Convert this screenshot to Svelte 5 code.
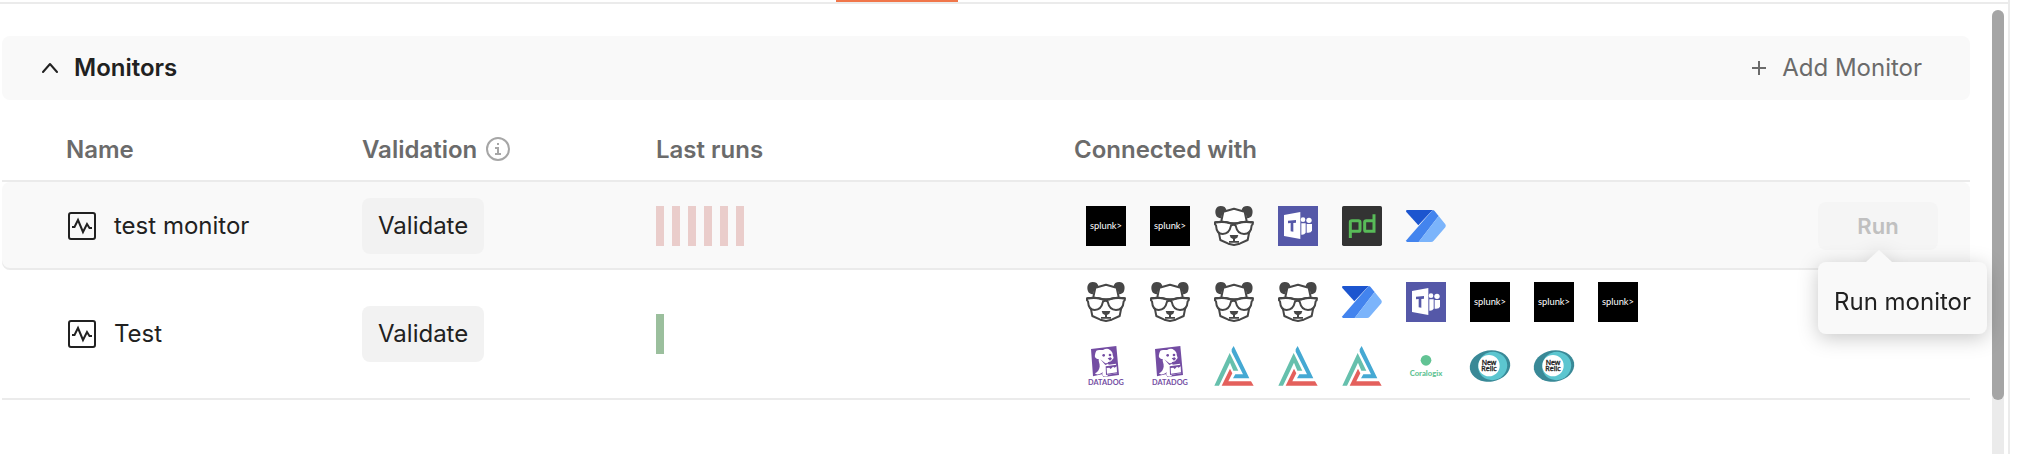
<script>
  const monitors = [
    {
      name: 'test monitor',
      status: 'failed',
      runs: 6,
      hovered: true,
      integrations: ['splunk', 'splunk', 'panda', 'teams', 'pagerduty', 'automate']
    },
    {
      name: 'Test',
      status: 'passed',
      runs: 1,
      hovered: false,
      integrations: [
        'panda', 'panda', 'panda', 'panda', 'automate', 'teams', 'splunk', 'splunk', 'splunk',
        'datadog', 'datadog', 'triangle', 'triangle', 'triangle', 'coralogix', 'newrelic', 'newrelic'
      ]
    }
  ];
  let open = $state(true);
</script>

{#snippet logo(kind)}
  <svg class="logo" viewBox="0 0 120 120" aria-hidden="true">
    {#if kind === 'splunk'}
      <rect width="120" height="120" fill="#000" />
      <text x="60" y="68" text-anchor="middle" font-size="28" fill="#fff" class="lato">splunk&gt;</text>
    {:else if kind === 'panda'}
      <g fill="#464646">
        <path d="M6 28C1 14 6 0 20 0c10 0 16 5 17 12L26 20l-5 17C13 36 8 33 6 28z" />
        <path d="M114 28c5-14 0-28-14-28-10 0-16 5-17 12l11 8 5 17c8-1 13-4 15-9z" />
      </g>
      <g fill="none" stroke="#464646" stroke-width="6" stroke-linejoin="round">
        <path fill="#fff" d="M22 45l6-28L60 8l32 9 6 28 8 32-5 25-24 11-17 4-17-4-24-11-5-25z" />
        <path fill="#fff" d="M3 49q29-5 48 3l9 1 9-1q19-8 48-3l-1 6-3 3c-1 17-7 26-23 26-15 0-22-10-25-25q-7-5-14 0c-3 15-10 25-25 25C13 84 7 75 6 58l-3-3z" />
      </g>
      <path fill="none" stroke="#464646" stroke-width="7" d="M4 49q28-4 47 3h18q19-7 47-3" />
      <path fill="#464646" d="M47 87h26l-3 8-7 4v6h12v5H45v-5h12v-6l-7-4z" />
    {:else if kind === 'teams'}
      <rect width="120" height="120" fill="#5558a8" />
      <g fill="#fff">
        <path d="M18 27l49-9v81l-49-9z" />
        <circle cx="75" cy="41" r="7" />
        <circle cx="93" cy="43" r="8" />
        <path d="M70 52h13v28q-4 7-13 6zM86 54h16v20q-3 8-16 6z" />
      </g>
      <path fill="#5558a8" d="M30 44l24-2v8l-8 1v26l-8-1V51l-8 1z" />
    {:else if kind === 'pagerduty'}
      <rect width="120" height="120" rx="5" fill="#333" />
      <g fill="none" stroke="#58bb58" stroke-width="9">
        <path d="M25 96V48q0-4 5-4h19q5 0 5 5v22q0 5-5 5H29" />
        <path d="M96 25v51H73q-5 0-5-5V49q0-5 5-5h22" />
      </g>
    {:else if kind === 'automate'}
      <path fill="#1c55cf" d="M0 15q0-3 4-3h76L37 58 1 18z" />
      <path fill="#4384ee" d="M80 12q3 0 5 2l13 16-60 78H4q-5 0-3-5z" />
      <path fill="#7bb4fb" d="M98 30l20 25q3 5 0 9l-35 40q-3 4-8 4H38z" />
    {:else if kind === 'datadog'}
      <path fill="#744da3" d="M15 9L91 0l8 87-46 6-6-8-26 6z" />
      <path fill="#fff" d="M31 14c6-4 14-1 20-2 7-3 14-6 21 0 5 4 9 9 8 14l3 10-8 10-10 3 3 7 22-3 4 29-28 4c0 4-7 8-14 4-4-3-4-8-1-12-8 6-19 11-24 4 8-4 13-11 14-20 1-9-4-15-3-23-8 0-13-5-11-12 1-7 3-11 4-13z" />
      <g fill="#744da3">
        <circle cx="53" cy="28" r="4" />
        <circle cx="72" cy="27" r="4" />
        <path d="M65 37l9-3 4 4-6 6zM59 61l33-5 4 25-36 6zM43 40l15 12 14-1-14 6z" />
      </g>
      <path fill="#fff" d="M62 66l8-1 4 4 7-7 5 3 6-4 1 18-30 4z" />
      <text x="60" y="118" text-anchor="middle" font-size="22" font-weight="700" fill="#744da3" class="lato">DATADOG</text>
    {:else if kind === 'triangle'}
      <path fill="#66c0ad" d="M1 119l46-98 26 53H58L48 50 15 119z" />
      <path fill="#45a9d3" d="M53 10L59 0l47 97H57l7-12h23L53 17z" />
      <path fill="#e4605c" d="M23 119l25-51 7 14-12 24h68l8 13z" />
    {:else if kind === 'coralogix'}
      <circle cx="60" cy="43" r="16" fill="#62c394" />
      <text x="60" y="91" text-anchor="middle" font-size="23" font-weight="900" fill="#62c394" class="lato">Coralogix</text>
    {:else}
      <ellipse cx="60" cy="60" rx="61" ry="47" fill="#398997" transform="rotate(-9 60 60)" />
      <ellipse cx="68" cy="60" rx="44" ry="42" fill="#5cc6d0" transform="rotate(-25 68 60)" />
      <circle cx="57" cy="59" r="32" fill="#fff" />
      <text x="57" y="56" text-anchor="middle" font-size="21" fill="#222" stroke="#222" class="noto">New</text>
      <text x="57" y="76" text-anchor="middle" font-size="21" fill="#222" stroke="#222" class="noto">Relic</text>
    {/if}
  </svg>
{/snippet}

<main class="page">
  <div class="tabs"><span class="active-tab"></span></div>
  <div class="body">
    <section class="content">
      <header class="section-head">
        <button class="toggle" aria-expanded={open} onclick={() => (open = !open)}>
          <svg width="16" height="12" viewBox="0 0 16 12" aria-hidden="true">
            <path d="M1 10l7-8 7 8" fill="none" stroke="#212121" stroke-width="2" stroke-linecap="round" stroke-linejoin="round" />
          </svg>
          <span>Monitors</span>
        </button>
        <button class="add">
          <svg width="14" height="14" viewBox="0 0 14 14" aria-hidden="true">
            <path d="M7 0v14M0 7h14" stroke="#6b6b6b" stroke-width="2" />
          </svg>
          <span>Add Monitor</span>
        </button>
      </header>

      {#if open}
        <table>
          <colgroup>
            <col class="col-name" /><col class="col-validation" /><col class="col-runs" /><col /><col class="col-action" />
          </colgroup>
          <thead>
            <tr>
              <th class="first">Name</th>
              <th>
                <div class="with-info">
                  Validation
                  <svg width="24" height="24" viewBox="0 0 24 24" aria-hidden="true">
                    <circle cx="12" cy="12" r="11" fill="none" stroke="#a6a6a6" stroke-width="2" />
                    <path d="M9 11h3v6M9 17h6M11 7h2" fill="none" stroke="#a6a6a6" stroke-width="2" />
                  </svg>
                </div>
              </th>
              <th>Last runs</th>
              <th>Connected with</th>
              <td></td>
            </tr>
          </thead>
          <tbody>
            {#each monitors as monitor}
              <tr class:hovered={monitor.hovered}>
                <td class="first">
                  <div class="name">
                    <svg width="28" height="28" viewBox="0 0 28 28" aria-hidden="true">
                      <rect x="1" y="1" width="26" height="26" rx="2" fill="none" stroke="#212121" stroke-width="2" />
                      <path d="M4 15h2.500l3.500-7 5 12 4-8 2.500 4H24" fill="none" stroke="#212121" stroke-width="2" />
                    </svg>
                    <span>{monitor.name}</span>
                  </div>
                </td>
                <td><button class="validate">Validate</button></td>
                <td>
                  <div class="runs">
                    {#each Array(monitor.runs) as _}<span class="run {monitor.status}"></span>{/each}
                  </div>
                </td>
                <td>
                  <div class="logos">
                    {#each monitor.integrations as kind}{@render logo(kind)}{/each}
                  </div>
                </td>
                <td>
                  {#if monitor.hovered}
                    <div class="action">
                      <button class="run-button" disabled>Run</button>
                      <div class="tooltip" role="tooltip">Run monitor</div>
                    </div>
                  {/if}
                </td>
              </tr>
            {/each}
          </tbody>
        </table>
      {/if}
    </section>
    <div class="scrollbar"><div class="thumb"></div></div>
  </div>
</main>

<style>
  :global(body) {
    background: #fff;
  }
  .page {
    box-sizing: border-box;
    display: flex;
    flex-direction: column;
    min-height: 100vh;
    margin-right: 32px;
    border-right: 2px solid #ebebeb;
    color: #212121;
    font-family: Inter, sans-serif;
    font-size: 24px;
    line-height: 32px;
  }
  .tabs {
    display: flex;
    height: 2px;
    padding-left: 836px;
    border-bottom: 2px solid #ebebeb;
  }
  .active-tab {
    width: 122px;
    background: #f0764a;
  }
  .body {
    flex: 1;
    display: flex;
    padding: 0 4px 0 2px;
  }
  .content {
    flex: 1;
    min-width: 0;
    padding-top: 32px;
  }
  button {
    border: 0;
    font: inherit;
    color: inherit;
    background: none;
  }
  .section-head {
    display: flex;
    align-items: center;
    justify-content: space-between;
    padding: 16px 48px 16px 40px;
    border-radius: 8px;
    background: #f9f9f9;
  }
  .toggle,
  .add {
    display: flex;
    align-items: center;
    gap: 16px;
    padding: 0;
  }
  .toggle {
    font-weight: 600;
  }
  .add {
    color: #6b6b6b;
  }
  table {
    width: 100%;
    table-layout: fixed;
    border-collapse: separate;
    border-spacing: 0;
  }
  .col-name {
    width: 360px;
  }
  .col-validation {
    width: 294px;
  }
  .col-runs {
    width: 418px;
  }
  .col-action {
    width: 152px;
  }
  th,
  td {
    padding: 0;
    text-align: left;
    vertical-align: middle;
    box-shadow: inset 0 -2px #ebebeb;
  }
  th {
    height: 82px;
    padding-top: 18px;
    box-sizing: border-box;
    color: #6b6b6b;
    font-weight: 600;
  }
  .first {
    padding-left: 64px;
  }
  .with-info {
    display: flex;
    align-items: center;
    gap: 9px;
  }
  .with-info svg {
    margin-bottom: 2px;
  }
  tbody tr {
    height: 88px;
  }
  tbody tr:last-child td {
    padding-bottom: 2px;
  }
  .hovered td {
    background: #f9f9f9;
  }
  .hovered td:first-child {
    border-radius: 8px 0 0 8px;
  }
  .hovered td:last-child {
    border-radius: 0 8px 8px 0;
  }
  .name {
    display: flex;
    align-items: center;
    gap: 18px;
    padding-left: 2px;
  }
  .validate {
    display: block;
    padding: 12px 16px;
    border-radius: 8px;
    background: #f2f2f2;
  }
  .runs {
    display: flex;
    gap: 8px;
  }
  .run {
    width: 8px;
    height: 40px;
  }
  .failed {
    background: #eacdcb;
  }
  .passed {
    background: #9bbf9d;
  }
  .logos {
    display: flex;
    flex-wrap: wrap;
    gap: 24px;
    max-width: 552px;
    padding: 12px;
  }
  .logo {
    width: 40px;
    height: 40px;
    overflow: visible;
  }
  .lato {
    font-family: Lato, sans-serif;
  }
  .noto {
    font-family: 'Noto Sans', sans-serif;
  }
  .action {
    position: relative;
    width: 120px;
  }
  .run-button {
    display: block;
    width: 100%;
    padding: 8px;
    border-radius: 8px;
    background: #f5f5f5;
    color: #c0c0c0;
    font-size: 22px;
    font-weight: 600;
  }
  .tooltip {
    position: absolute;
    top: 60px;
    left: 0;
    padding: 24px 16px 16px;
    border-radius: 8px;
    background: #f9f9f9;
    white-space: nowrap;
    filter: drop-shadow(0 4px 10px rgb(0 0 0 / 22%));
    z-index: 1;
  }
  .tooltip::before {
    content: '';
    position: absolute;
    top: -12px;
    left: 48px;
    border: 13px solid transparent;
    border-top: 0;
    border-bottom: 12px solid #f9f9f9;
  }
  .scrollbar {
    width: 12px;
    margin-left: 22px;
    margin-top: 6px;
    border-radius: 6px 6px 0 0;
    background: #ebebeb;
  }
  .thumb {
    height: 390px;
    border-radius: 6px;
    background: #a5a5a5;
  }
</style>
